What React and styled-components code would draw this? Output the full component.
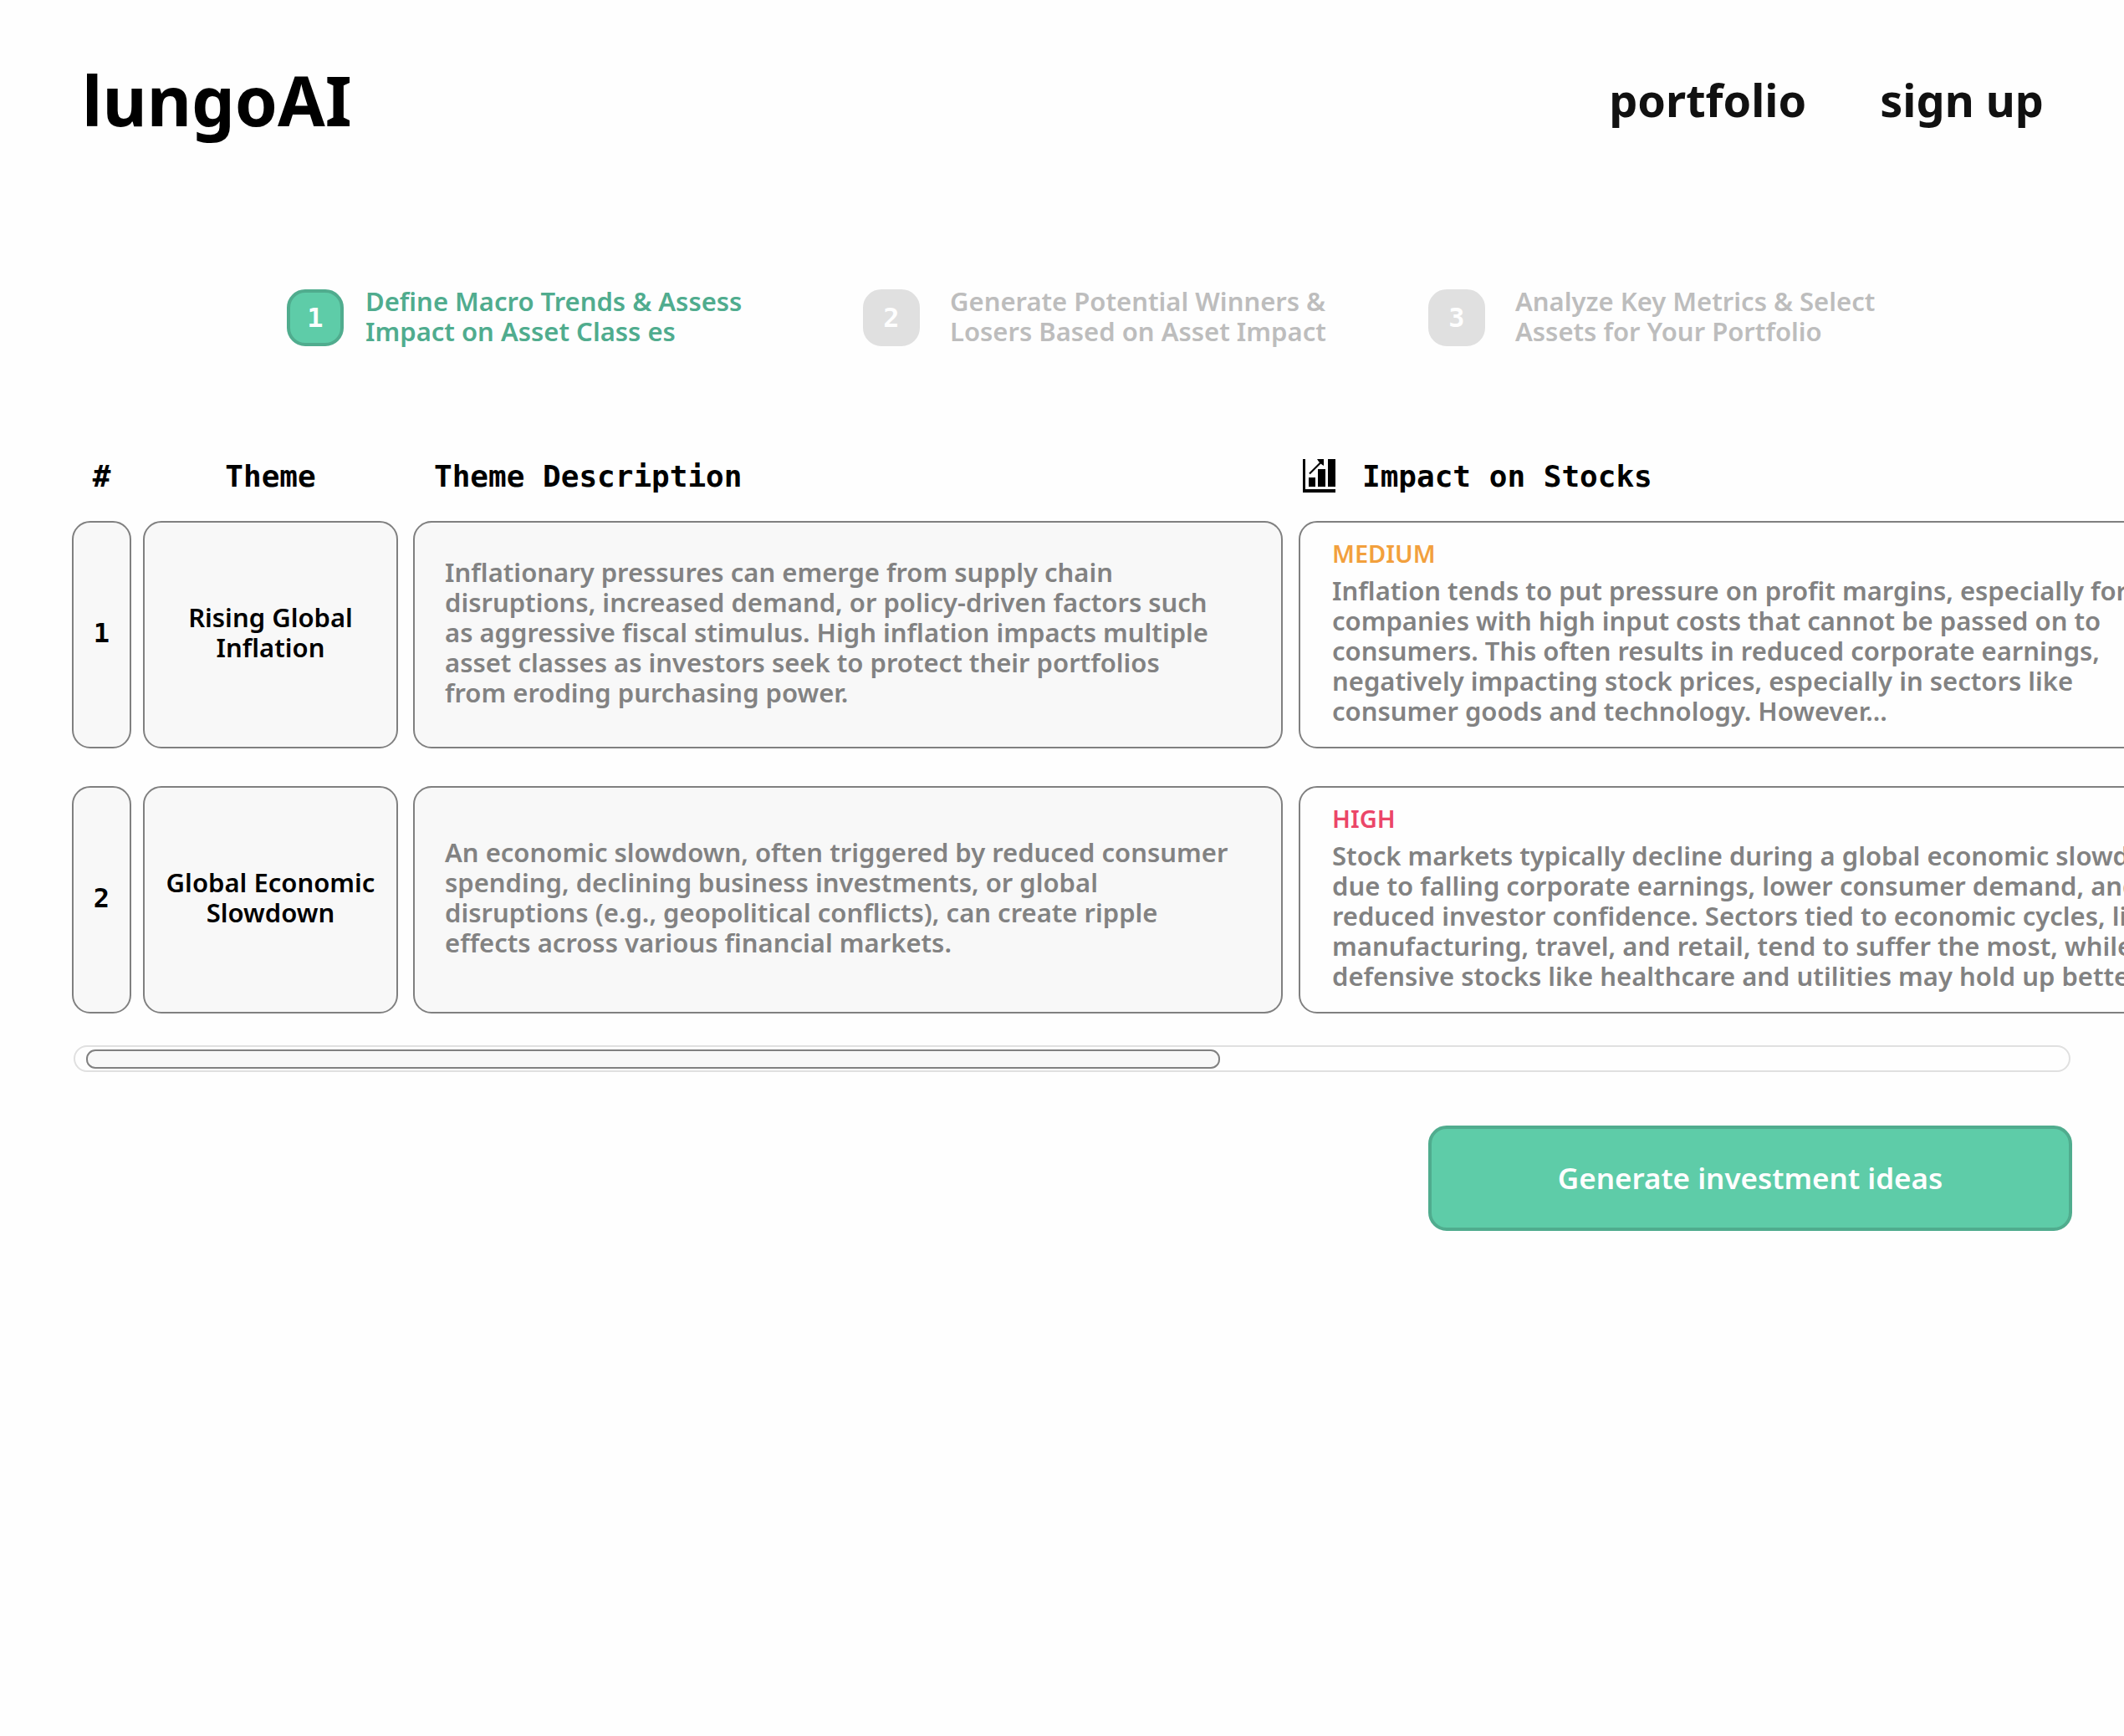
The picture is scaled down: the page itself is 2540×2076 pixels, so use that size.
import React, { useState } from 'react';
import styled, { createGlobalStyle } from 'styled-components';

const sans = '"Noto Sans", "Open Sans", sans-serif';
const mono = '"DejaVu Sans Mono", monospace';

const color = {
  page: '#fefefe',
  ink: '#000000',
  nav: '#111111',
  body: '#828282',
  line: '#808080',
  panel: '#f8f8f8',
  green: '#5ecca8',
  greenDark: '#50ac8e',
  mutedText: '#bdbdbd',
  muted: '#e0e0e0',
  medium: '#f2a03d',
  high: '#eb4668',
};

const GlobalStyle = createGlobalStyle`
  *, *::before, *::after { box-sizing: border-box; }
  body {
    margin: 0;
    background: ${color.page};
    color: ${color.ink};
    font-family: ${sans};
    font-weight: 600;
    overflow-x: hidden;
  }
`;

const Header = styled.header`
  display: flex;
  align-items: center;
  justify-content: space-between;
  padding: 63px 96px 0 98px;
  font-weight: 700;
`;

const Logo = styled.a`
  color: ${color.ink};
  font-size: 82px;
  line-height: 112px;
  text-decoration: none;
`;

const Nav = styled.nav`
  display: flex;
  gap: 88px;
`;

const NavLink = styled.a`
  color: ${color.nav};
  font-size: 54px;
  line-height: 74px;
  text-decoration: none;
`;

const Steps = styled.ol`
  display: grid;
  grid-template-columns: 689fr 676fr 768fr;
  margin: 167px 0 0;
  padding: 0 64px 0 343px;
  list-style: none;
`;

const Step = styled.li`
  display: flex;
  align-items: flex-end;
  gap: ${(p) => (p.$active ? 26 : 36)}px;
  color: ${(p) => (p.$active ? color.greenDark : color.mutedText)};
`;

const Badge = styled.span`
  display: flex;
  flex: none;
  align-items: center;
  justify-content: center;
  width: 68px;
  height: 68px;
  border: 4px solid ${(p) => (p.$active ? color.greenDark : color.muted)};
  border-radius: 22px;
  background: ${(p) => (p.$active ? color.green : color.muted)};
  color: ${color.page};
  font: 700 32px/36px ${mono};
`;

const StepText = styled.span`
  font-size: 31px;
  line-height: 36px;
  white-space: pre;
`;

const Main = styled.main`
  padding: 135px 62px 64px 86px;
`;

const Scroller = styled.div`
  margin-right: -62px;
  overflow-x: auto;
  scrollbar-width: none;
`;

const Table = styled.table`
  width: 2640px;
  table-layout: fixed;
  border-collapse: collapse;
`;

const Col = styled.col`
  width: ${(p) => p.$width};
`;

const HeadCell = styled.th`
  padding: 0 ${(p) => p.$gap}px 32px ${(p) => p.$indent || 0}px;
  font: 700 36px/42px ${mono};
  text-align: ${(p) => p.$align || 'left'};
`;

const IconLabel = styled.span`
  display: flex;
  gap: 32px;
`;

const Cell = styled.td`
  padding: 0 ${(p) => p.$gap}px 45px 0;

  tr:last-child > & {
    padding-bottom: 0;
  }
`;

const Card = styled.div`
  display: flex;
  flex-direction: column;
  justify-content: center;
  min-height: 272px;
  border: 2px solid ${color.line};
  border-radius: 22px;
  background: ${color.panel};
  font-size: 31px;
  line-height: 36px;
`;

const NumberCard = styled(Card)`
  align-items: center;
  padding-bottom: 4px;
  font: 700 32px/36px ${mono};
`;

const ThemeCard = styled(Card)`
  padding: 0 24px 6px;
  text-align: center;
`;

const TextCard = styled(Card)`
  padding: 0 36px 6px;
  color: ${color.body};
  white-space: pre;
`;

const ImpactCard = styled(TextCard)`
  padding: 0 38px 6px;
  background: ${color.page};
`;

const Level = styled.strong`
  margin-bottom: 8px;
  color: ${(p) => color[p.$level]};
  font-size: 29px;
  font-weight: 600;
  text-transform: uppercase;
`;

const Track = styled.div`
  display: flex;
  align-items: center;
  height: 32px;
  margin: 38px 2px 0;
  padding: 0 13px;
  border: 2px solid ${color.muted};
  border-radius: 16px;
`;

const Thumb = styled.div`
  flex: none;
  width: 57.5%;
  height: 23px;
  border: 2px solid ${color.line};
  border-radius: 11px;
  background: ${color.panel};
`;

const Actions = styled.div`
  display: flex;
  justify-content: flex-end;
  margin-top: 64px;
`;

const PrimaryButton = styled.button`
  width: 770px;
  height: 126px;
  border: 4px solid ${color.greenDark};
  border-radius: 22px;
  background: ${color.green};
  color: ${color.page};
  font: 600 35px/48px ${sans};
  cursor: pointer;
`;

const steps = [
  { text: 'Define Macro Trends & Assess\nImpact on Asset Class es', active: true },
  { text: 'Generate Potential Winners &\nLosers Based on Asset Impact' },
  { text: 'Analyze Key Metrics & Select\nAssets for Your Portfolio' },
];

const themes = [
  {
    name: 'Rising Global Inflation',
    description:
      'Inflationary pressures can emerge from supply chain\ndisruptions, increased demand, or policy-driven factors such\nas aggressive fiscal stimulus. High inflation impacts multiple\nasset classes as investors seek to protect their portfolios\nfrom eroding purchasing power.',
    level: 'medium',
    impact:
      'Inflation tends to put pressure on profit margins, especially for\ncompanies with high input costs that cannot be passed on to\nconsumers. This often results in reduced corporate earnings,\nnegatively impacting stock prices, especially in sectors like\nconsumer goods and technology. However...',
  },
  {
    name: 'Global Economic Slowdown',
    description:
      'An economic slowdown, often triggered by reduced consumer\nspending, declining business investments, or global\ndisruptions (e.g., geopolitical conflicts), can create ripple\neffects across various financial markets.',
    level: 'high',
    impact:
      'Stock markets typically decline during a global economic slowdown\ndue to falling corporate earnings, lower consumer demand, and\nreduced investor confidence. Sectors tied to economic cycles, like\nmanufacturing, travel, and retail, tend to suffer the most, while\ndefensive stocks like healthcare and utilities may hold up better.',
  },
];

function StocksIcon() {
  return (
    <svg width="39" height="40" viewBox="0 0 39 40" aria-hidden="true">
      <path d="M0 0h3v36h36v4H0z" />
      <path d="M7 22h8v11H7zM18 12h9v21h-9zM30 0h9v33h-9z" />
      <path d="M8 17.500L22 3.500" stroke="#000" strokeWidth="2.200" />
      <path d="M17 0h8v8l-3-2-3-3z" />
    </svg>
  );
}

export default function App() {
  const [progress, setProgress] = useState(0);
  const onScroll = (e) => {
    const { scrollLeft, scrollWidth, clientWidth } = e.currentTarget;
    setProgress(scrollLeft / Math.max(1, scrollWidth - clientWidth));
  };

  return (
    <>
      <GlobalStyle />
      <Header>
        <Logo href="#">lungoAI</Logo>
        <Nav>
          <NavLink href="#portfolio">portfolio</NavLink>
          <NavLink href="#signup">sign up</NavLink>
        </Nav>
      </Header>
      <Steps>
        {steps.map((s, i) => (
          <Step key={s.text} $active={s.active}>
            <Badge $active={s.active}>{i + 1}</Badge>
            <StepText>{s.text}</StepText>
          </Step>
        ))}
      </Steps>
      <Main>
        <Scroller id="themes" onScroll={onScroll}>
          <Table>
            <colgroup>
              <Col $width="85px" />
              <Col $width="323px" />
              <Col $width="1059px" />
              <Col $width="auto" />
            </colgroup>
            <thead>
              <tr>
                <HeadCell scope="col" $gap={14} $align="center">#</HeadCell>
                <HeadCell scope="col" $gap={18} $align="center">Theme</HeadCell>
                <HeadCell scope="col" $gap={19} $indent={25}>Theme Description</HeadCell>
                <HeadCell scope="col" $gap={0} $indent={5}>
                  <IconLabel>
                    <StocksIcon />
                    Impact on Stocks
                  </IconLabel>
                </HeadCell>
              </tr>
            </thead>
            <tbody>
              {themes.map((t, i) => (
                <tr key={t.name}>
                  <Cell $gap={14}>
                    <NumberCard>{i + 1}</NumberCard>
                  </Cell>
                  <Cell $gap={18}>
                    <ThemeCard>{t.name}</ThemeCard>
                  </Cell>
                  <Cell $gap={19}>
                    <TextCard>{t.description}</TextCard>
                  </Cell>
                  <Cell $gap={0}>
                    <ImpactCard>
                      <Level $level={t.level}>{t.level}</Level>
                      {t.impact}
                    </ImpactCard>
                  </Cell>
                </tr>
              ))}
            </tbody>
          </Table>
        </Scroller>
        <Track
          role="scrollbar"
          aria-controls="themes"
          aria-orientation="horizontal"
          aria-valuemin={0}
          aria-valuemax={100}
          aria-valuenow={Math.round(progress * 100)}
        >
          <Thumb style={{ marginLeft: `${progress * 42.5}%` }} />
        </Track>
        <Actions>
          <PrimaryButton type="button">Generate investment ideas</PrimaryButton>
        </Actions>
      </Main>
    </>
  );
}
